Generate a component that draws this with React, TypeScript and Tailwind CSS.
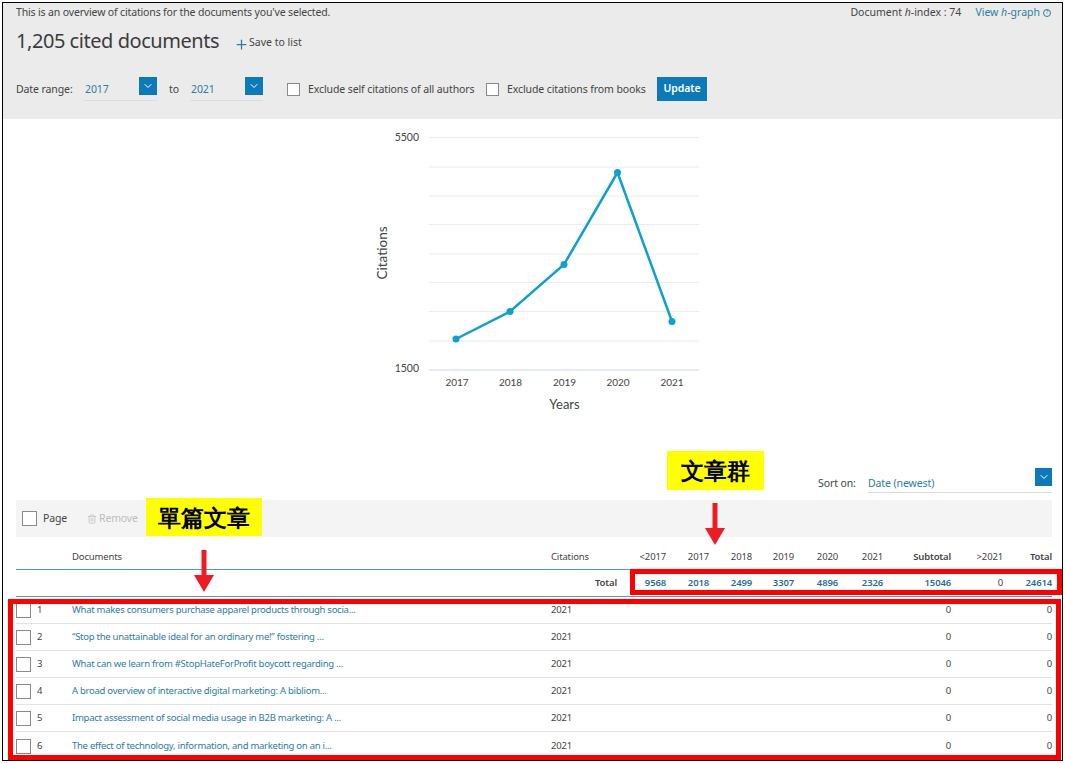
import { Plus, Trash2, ChevronDown } from "lucide-react"

const font = "font-['Lato','Noto_Sans',sans-serif]"

const years = ["<2017", "2017", "2018", "2019", "2020", "2021"]
const totals = ["9568", "2018", "2499", "3307", "4896", "2326"]
const cols =
  "grid grid-cols-[56px_479px_74px_41px_43px_43px_42px_44px_45px_68px_52px_49px] items-center"

const docs = [
  "What makes consumers purchase apparel products through socia...",
  "“Stop the unattainable ideal for an ordinary me!” fostering ...",
  "What can we learn from #StopHateForProfit boycott regarding ...",
  "A broad overview of interactive digital marketing: A bibliom...",
  "Impact assessment of social media usage in B2B marketing: A ...",
  "The effect of technology, information, and marketing on an i...",
]

function DateSelect({ value, width }: { value: string; width: string }) {
  return (
    <div className={`relative h-[24px] border-b border-[#dcdcdc] ${width}`}>
      <span className="absolute left-[1px] top-[5px] text-[10.500px] text-[#2b7ea1]">{value}</span>
      <span className="absolute right-0 top-0 flex h-[18px] w-[18px] items-center justify-center bg-[#0c7ab8]">
        <ChevronDown className="h-3 w-3 text-white" strokeWidth={2} />
      </span>
    </div>
  )
}

function Box({ size = "h-[13px] w-[13px]" }: { size?: string }) {
  return <span className={`block border border-[#8a8a8a] bg-white ${size}`} />
}

function Chart() {
  const grid = [137.5, 167, 196, 224.5, 254, 282.5, 311.5, 341]
  const pts = [
    [456, 339],
    [510, 311.5],
    [564, 264.5],
    [617.5, 172.5],
    [672, 321.5],
  ]
  return (
    <svg className="absolute left-0 top-0" width="1065" height="430" viewBox="0 0 1065 430">
      {grid.map((y) => (
        <line key={y} x1="429" x2="699" y1={y} y2={y} stroke="#e9ecf0" strokeWidth="1" />
      ))}
      <line x1="429" x2="699" y1="370" y2="370" stroke="#cdd8e6" strokeWidth="1" />
      <polyline
        points={pts.map((p) => p.join(",")).join(" ")}
        fill="none"
        stroke="#0ea0cf"
        strokeWidth="2.5"
      />
      {pts.map((p) => (
        <circle key={p[0]} cx={p[0]} cy={p[1]} r="3.5" fill="#0ea0cf" />
      ))}
      <g fill="#444" fontSize="10" fontFamily="Lato, sans-serif">
        <text x="419" y="141" textAnchor="end" fontSize="10.500">5500</text>
        <text x="419" y="372" textAnchor="end" fontSize="10.500">1500</text>
        <text x="457" y="386" textAnchor="middle">2017</text>
        <text x="510.500" y="386" textAnchor="middle">2018</text>
        <text x="564.500" y="386" textAnchor="middle">2019</text>
        <text x="618" y="386" textAnchor="middle">2020</text>
        <text x="672" y="386" textAnchor="middle">2021</text>
      </g>
      <text x="564.500" y="408.500" textAnchor="middle" fill="#444" fontSize="13" fontFamily="Lato, sans-serif">
        Years
      </text>
      <text
        transform="translate(387 253) rotate(-90)"
        textAnchor="middle"
        fill="#444"
        fontSize="13.500"
        fontFamily="Lato, sans-serif"
      >
        Citations
      </text>
    </svg>
  )
}

function Arrow({ className }: { className: string }) {
  return (
    <svg className={`absolute ${className}`} width="20" height="42" viewBox="0 0 20 42">
      <rect x="7.500" y="0" width="5" height="25" fill="#ed1c24" />
      <path d="M0 25 H20 L10 42 Z" fill="#ed1c24" />
    </svg>
  )
}

export default function App() {
  return (
    <div className={`relative h-[764px] w-[1065px] overflow-hidden bg-white ${font} text-[#444]`}>
      <div className="absolute left-[2px] top-[2px] h-[759px] w-[1061px] border border-black" />

      <div className="absolute left-[3px] top-[3px] h-[116px] w-[1059px] bg-[#ebebeb] pl-[13px]">
        <div className="flex h-[19px] items-center justify-between pr-[11px] text-[10.500px] tracking-[-0.15px]">
          <span>This is an overview of citations for the documents you've selected.</span>
          <span className="flex items-center tracking-normal">
            <span>
              Document <i>h</i>-index : 74
            </span>
            <span className="ml-[14px] text-[#2b7ea1]">
              View <i>h</i>-graph
            </span>
            <span className="ml-[3px] flex h-[8px] w-[8px] items-center justify-center rounded-full border border-[#2b7ea1] text-[6px] text-[#2b7ea1]">
              ?
            </span>
          </span>
        </div>
        <div className="mt-[6px] flex items-center">
          <span className="w-[218px] whitespace-nowrap text-[20px] leading-[26px] tracking-[-0.45px] text-[#3c3c3c]">
            1,205 cited documents
          </span>
          <Plus className="mt-[6px] h-[15px] w-[15px] text-[#2b7ea1]" strokeWidth={2} />
          <span className="mt-[4px] text-[10.500px]">Save to list</span>
        </div>
        <div className="mt-[23px] flex items-start whitespace-nowrap text-[10.500px] tracking-[-0.1px]">
          <span className="mt-[5px] w-[68px]">Date range:</span>
          <DateSelect value="2017" width="w-[73px]" />
          <span className="ml-[12px] mt-[5px] w-[21px]">to</span>
          <DateSelect value="2021" width="w-[73px]" />
          <div className="ml-[24px] mt-[6px]">
            <Box />
          </div>
          <span className="ml-[8px] mt-[5px] w-[170px]">Exclude self citations of all authors</span>
          <div className="ml-[8px] mt-[6px]">
            <Box />
          </div>
          <span className="ml-[8px] mt-[5px] w-[150px]">Exclude citations from books</span>
          <button className="flex h-[24px] w-[50px] items-center justify-center bg-[#0c7ab8] text-[10.500px] font-semibold text-white">
            Update
          </button>
        </div>
      </div>

      <Chart />

      <div className="absolute left-[818px] top-[470px] flex w-[234px] items-start text-[10.500px] tracking-[-0.1px]">
        <span className="mt-[6px] w-[50px]">Sort on:</span>
        <div className="relative h-[23px] flex-1 border-b border-[#dcdcdc]">
          <span className="absolute left-0 top-[6px] text-[#2b7ea1]">Date (newest)</span>
          <span className="absolute right-0 top-[-2px] flex h-[18px] w-[17px] items-center justify-center bg-[#0c7ab8]">
            <ChevronDown className="h-3 w-3 text-white" strokeWidth={2} />
          </span>
        </div>
      </div>

      <div className="absolute left-[16px] top-[500px] flex h-[37px] w-[1036px] items-center bg-[#f4f4f4] pl-[6px] text-[10.500px] tracking-[-0.15px]">
        <Box size="h-[15px] w-[15px]" />
        <span className="ml-[6px]">Page</span>
        <Trash2 className="ml-[20px] h-[10px] w-[10px] text-[#c4c4c4]" />
        <span className="ml-[2px] text-[#bdbdbd]">Remove</span>
      </div>

      <div className="absolute left-[16px] top-[543px] w-[1036px] text-[9.500px] tracking-[-0.15px]">
        <div className={`${cols} h-[27px] border-b border-[#4a9fc0] pt-[2px]`}>
          <span />
          <span>Documents</span>
          <span>Citations</span>
          {years.map((y) => (
            <span key={y} className="text-right">{y}</span>
          ))}
          <span className="text-right font-semibold">Subtotal</span>
          <span className="text-right">&gt;2021</span>
          <span className="text-right font-semibold">Total</span>
        </div>
        <div className={`${cols} h-[27px] border-b border-[#4a9fc0] pt-[1px]`}>
          <span />
          <span />
          <span className="mr-[8px] text-right font-semibold">Total</span>
          {totals.map((t) => (
            <span key={t} className="text-right font-semibold text-[#1f6f93]">{t}</span>
          ))}
          <span className="text-right font-semibold text-[#1f6f93]">15046</span>
          <span className="text-right">0</span>
          <span className="text-right font-semibold text-[#1f6f93]">24614</span>
        </div>
        {docs.map((d, i) => (
          <div key={i} className={`${cols} h-[27px] border-b border-[#e3e3e3] pt-[1px] last:border-b-0`}>
            <span className="flex items-center">
              <Box size="h-[15px] w-[15px]" />
              <span className="ml-[6px]">{i + 1}</span>
            </span>
            <span className="whitespace-nowrap tracking-[-0.27px] text-[#2b7ea1]">{d}</span>
            <span>2021</span>
            <span className="col-span-6" />
            <span className="text-right">0</span>
            <span />
            <span className="text-right">0</span>
          </div>
        ))}
      </div>

      <div className="absolute left-[146px] top-[498px] flex h-[38px] w-[116px] items-center justify-center bg-[#ffff00] font-['Noto_Sans_CJK_TC',sans-serif] text-[23px] font-bold text-black">
        單篇文章
      </div>
      <div className="absolute left-[667px] top-[451px] flex h-[39px] w-[97px] items-center justify-center bg-[#ffff00] font-['Noto_Sans_CJK_TC',sans-serif] text-[23px] font-bold text-black">
        文章群
      </div>
      <Arrow className="left-[194px] top-[550px]" />
      <Arrow className="left-[705px] top-[503px]" />

      <div className="absolute left-[630px] top-[569px] h-[26px] w-[432px] border-[5px] border-[#ff0000]" />
      <div className="absolute left-[8px] top-[599px] h-[161px] w-[1053px] border-[5px] border-[#ff0000]" />
    </div>
  )
}
